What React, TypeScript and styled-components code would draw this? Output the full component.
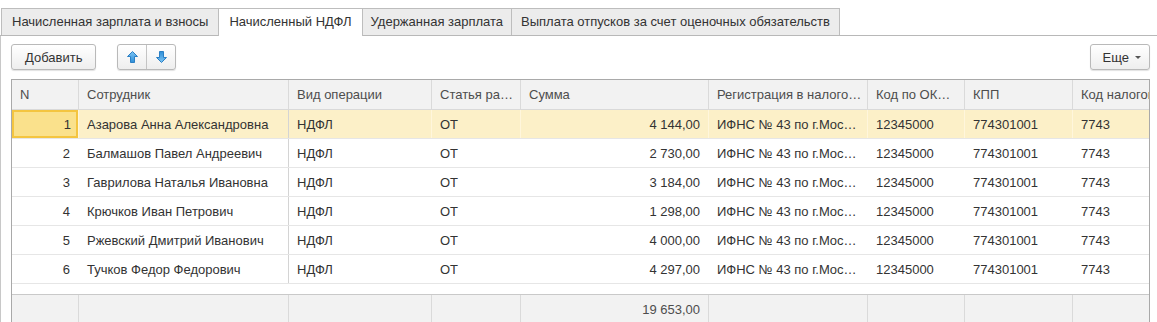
import React from 'react';
import styled, { createGlobalStyle, css } from 'styled-components';

const GlobalStyle = createGlobalStyle`
    html, body {
        margin: 0;
        padding: 0;
        background: #fff;
        overflow: hidden;
    }
    body {
        font-family: "Liberation Sans", Arial, sans-serif;
        font-size: 13px;
        color: #333;
    }
`;

const COLUMNS = '67px 210px 143px 89px 188px 159px 97px 108px 220px';

const Page = styled.div`
    width: 1157px;
    height: 322px;
    overflow: hidden;
`;

const TabBar = styled.div`
    display: flex;
    align-items: flex-start;
    padding: 8px 0 0 1px;
    border-bottom: 1px solid #b8b8b8;
    height: 36px;
    box-sizing: border-box;
`;

const Tab = styled.div<{ $active?: boolean; $pad?: number }>`
    height: 27px;
    box-sizing: border-box;
    padding: 0 ${p => p.$pad ?? 10}px;
    line-height: 25px;
    border: 1px solid #bdbdbd;
    border-bottom: none;
    margin-right: -1px;
    background: #ececec;
    color: #333;
    white-space: nowrap;
    ${p => p.$active && css`
        background: #fff;
        height: 28px;
        position: relative;
        z-index: 1;
    `}
`;

const Panel = styled.div`
    border-left: 1px solid #c8c8c8;
    padding: 8px 0 0 10px;
    height: 300px;
`;

const Toolbar = styled.div`
    display: flex;
    align-items: center;
    gap: 21px;
    width: 1139px;
    height: 26px;
`;

const buttonLook = css`
    height: 26px;
    box-sizing: border-box;
    border: 1px solid #b9b9b9;
    border-radius: 3px;
    background: linear-gradient(#ffffff, #eeeeee);
    box-shadow: 0 1px 1px rgba(0, 0, 0, 0.12);
    color: #333;
    font: inherit;
`;

const Button = styled.div`
    ${buttonLook};
    display: flex;
    align-items: center;
    padding: 0 13px;
`;

const MoreButton = styled(Button)`
    margin-left: auto;
    padding: 0 8px 0 12px;
    gap: 6px;
`;

const ArrowGroup = styled.div`
    ${buttonLook};
    display: flex;
`;

const ArrowCell = styled.div<{ $last?: boolean }>`
    width: 28px;
    display: flex;
    align-items: center;
    justify-content: center;
    border-right: ${p => (p.$last ? 'none' : '1px solid #c4c4c4')};
`;

const Table = styled.div`
    margin-top: 9px;
    width: 1139px;
    border: 1px solid #a9a9a9;
    border-bottom: none;
    box-sizing: border-box;
    overflow: hidden;
`;

const Row = styled.div<{ $kind?: 'head' | 'body' | 'selected' | 'foot' }>`
    display: grid;
    grid-template-columns: ${COLUMNS};
    height: 29px;
    box-sizing: border-box;
    border-bottom: 1px solid #e6e6e6;
    ${p => p.$kind === 'head' && css`
        height: 30px;
        background: #f2f2f2;
        color: #4d4d4d;
        border-bottom: 1px solid #d9d9d9;
    `}
    ${p => p.$kind === 'selected' && css`
        background: #fcf0c8;
    `}
    ${p => p.$kind === 'foot' && css`
        height: 30px;
        background: #f2f2f2;
        color: #4d4d4d;
        border-top: 1px solid #c9c9c9;
        border-bottom: none;
    `}
`;

const Body = styled.div`
    height: 184px;
`;

const Cell = styled.div<{ $right?: boolean; $line?: string; $current?: boolean }>`
    display: flex;
    align-items: center;
    justify-content: ${p => (p.$right ? 'flex-end' : 'flex-start')};
    padding: 0 8px 0 8px;
    box-sizing: border-box;
    white-space: nowrap;
    overflow: hidden;
    border-right: 1px solid ${p => p.$line || 'transparent'};
    ${p => p.$current && css`
        background: #fae18c;
        box-shadow: inset 0 0 0 2px #f4c540;
        padding-right: 7px;
    `}
`;

type Employee = {
    n: number;
    name: string;
    sum: string;
};

const employees: Employee[] = [
    { n: 1, name: 'Азарова Анна Александровна', sum: '4 144,00' },
    { n: 2, name: 'Балмашов Павел Андреевич', sum: '2 730,00' },
    { n: 3, name: 'Гаврилова Наталья Ивановна', sum: '3 184,00' },
    { n: 4, name: 'Крючков Иван Петрович', sum: '1 298,00' },
    { n: 5, name: 'Ржевский Дмитрий Иванович', sum: '4 000,00' },
    { n: 6, name: 'Тучков Федор Федорович', sum: '4 297,00' },
];

const headers = [
    'N',
    'Сотрудник',
    'Вид операции',
    'Статья ра…',
    'Сумма',
    'Регистрация в налого…',
    'Код по ОК…',
    'КПП',
    'Код налогового органа',
];

const Arrow = ({ down }: { down?: boolean }) => (
    <svg width="11" height="12" viewBox="0 0 11 12" style={down ? { transform: 'rotate(180deg)' } : undefined}>
        <defs>
            <linearGradient id={down ? 'ad' : 'au'} x1="0" y1="0" x2="0" y2="1">
                <stop offset="0" stopColor="#7cc4f4" />
                <stop offset="1" stopColor="#2f8fd8" />
            </linearGradient>
        </defs>
        <path d="M5.5 0.5 L10.5 5.5 H7.5 V11.5 H3.5 V5.5 H0.5 Z" fill={`url(#${down ? 'ad' : 'au'})`} stroke="#2b7fc4" strokeWidth="1" strokeLinejoin="round" />
    </svg>
);

const Caret = styled.span`
    width: 0;
    height: 0;
    border-left: 3px solid transparent;
    border-right: 3px solid transparent;
    border-top: 3px solid #555;
    margin-top: 1px;
`;

const App = () => {
    const line = '#dadada';
    return (
        <Page>
            <GlobalStyle />
            <TabBar>
                <Tab>Начисленная зарплата и взносы</Tab>
                <Tab $active>Начисленный НДФЛ</Tab>
                <Tab $pad={8}>Удержанная зарплата</Tab>
                <Tab $pad={9}>Выплата отпусков за счет оценочных обязательств</Tab>
            </TabBar>
            <Panel>
                <Toolbar>
                    <Button>Добавить</Button>
                    <ArrowGroup>
                        <ArrowCell><Arrow /></ArrowCell>
                        <ArrowCell $last><Arrow down /></ArrowCell>
                    </ArrowGroup>
                    <MoreButton>Еще <Caret /></MoreButton>
                </Toolbar>
                <Table>
                    <Row $kind="head">
                        {headers.map((h, i) => (
                            <Cell key={i} $line={i < headers.length - 1 ? line : undefined}>{h}</Cell>
                        ))}
                    </Row>
                    <Body>
                        {employees.map((e, i) => {
                            const sel = i === 0;
                            const soft = sel ? '#fff6dc' : undefined;
                            return (
                                <Row key={e.n} $kind={sel ? 'selected' : 'body'}>
                                    <Cell $right $current={sel} $line={sel ? soft : undefined}>{e.n}</Cell>
                                    <Cell $line="#d4d4d4">{e.name}</Cell>
                                    <Cell $line={soft}>НДФЛ</Cell>
                                    <Cell $line={soft}>ОТ</Cell>
                                    <Cell $right $line={soft}>{e.sum}</Cell>
                                    <Cell $line={soft}>ИФНС № 43 по г.Мос…</Cell>
                                    <Cell $line={soft}>12345000</Cell>
                                    <Cell $line={soft}>774301001</Cell>
                                    <Cell>7743</Cell>
                                </Row>
                            );
                        })}
                    </Body>
                    <Row $kind="foot">
                        {headers.map((_, i) => (
                            <Cell key={i} $right={i === 4} $line={i < headers.length - 1 ? line : undefined}>
                                {i === 4 ? '19 653,00' : ''}
                            </Cell>
                        ))}
                    </Row>
                </Table>
            </Panel>
        </Page>
    );
};

export default App;
